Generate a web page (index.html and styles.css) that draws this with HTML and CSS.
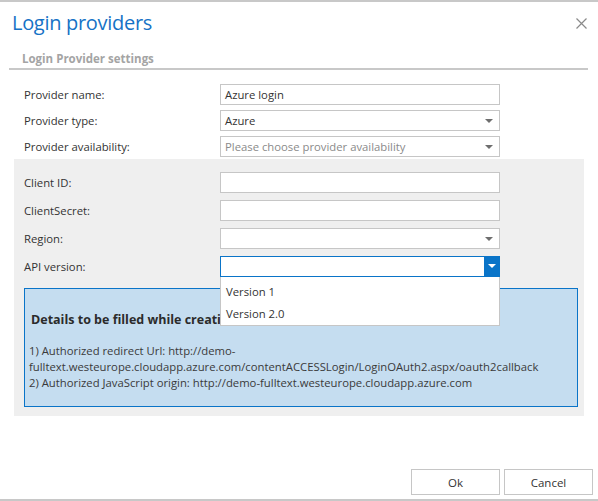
FILE: index.html
```html
<!DOCTYPE html>
<html>
<head>
<meta charset="utf-8">
<link rel="stylesheet" href="styles.css">
</head>
<body>
<div class="dialog">
  <div class="header">
    <h1 class="title">Login providers</h1>
    <span class="close">
      <svg width="11" height="11" viewBox="0 0 11 11"><path d="M0.5 0.5 L10.5 10.5 M10.5 0.5 L0.5 10.5" stroke="#8a8a8a" stroke-width="1.2" fill="none"/></svg>
    </span>
  </div>
  <div class="section-head">Login Provider settings</div>

  <div class="form top-form">
    <label class="lbl">Provider name:</label>
    <div class="field">Azure login</div>
    <label class="lbl">Provider type:</label>
    <div class="field select">Azure<span class="arrow"></span></div>
    <label class="lbl">Provider availability:</label>
    <div class="field select placeholder">Please choose provider availability<span class="arrow"></span></div>
  </div>

  <div class="gray">
    <div class="form gray-form">
      <label class="lbl">Client ID:</label>
      <div class="field"></div>
      <label class="lbl">ClientSecret:</label>
      <div class="field"></div>
      <label class="lbl">Region:</label>
      <div class="field select"><span class="arrow"></span></div>
      <label class="lbl">API version:</label>
      <div class="field select active"><span class="btn-arrow"><span class="arrow white"></span></span>
        <div class="dropdown">
          <div class="opt">Version 1</div>
          <div class="opt">Version 2.0</div>
        </div>
      </div>
    </div>
    <div class="info">
      <div class="info-title">Details to be filled while creating the app</div>
      <div class="info-text">1) Authorized redirect Url: http://demo-<br>fulltext.westeurope.cloudapp.azure.com/contentACCESSLogin/LoginOAuth2.aspx/oauth2callback<br>2) Authorized JavaScript origin: http://demo-fulltext.westeurope.cloudapp.azure.com</div>
    </div>
  </div>

  <div class="footer">
    <button class="btn">Ok</button>
    <button class="btn">Cancel</button>
  </div>
</div>
</body>
</html>
```
FILE: styles.css
```css
html, body {
  margin: 0;
  padding: 0;
  background: #fff;
}
body {
  font-family: "Open Sans", "Noto Sans", sans-serif;
  font-size: 11.3px;
  color: #333;
}
.dialog {
  width: 598px;
  height: 501px;
  box-sizing: border-box;
  border-top: 2px solid #c8c8c8;
  border-bottom: 2px solid #c8c8c8;
  display: flex;
  flex-direction: column;
}
.header {
  display: flex;
  justify-content: space-between;
  align-items: flex-start;
  padding: 0 11px 0 12px;
  height: 42px;
}
.title {
  margin: 0;
  font-weight: normal;
  font-size: 20px;
  letter-spacing: -0.3px;
  line-height: 30px;
  padding-top: 6px;
  color: #1672c6;
}
.close {
  margin-top: 16px;
  display: block;
  line-height: 0;
}
.section-head {
  margin: 0 10px 0 9px;
  padding: 7px 0 1px 13px;
  border-bottom: 2px solid #c8c8c8;
  font-weight: bold;
  color: #a4a4a4;
  font-size: 11.5px;
  line-height: 16px;
}
.form {
  display: grid;
  grid-template-columns: 196px 280px;
  align-items: center;
}
.top-form {
  padding: 14px 0 0 24px;
  row-gap: 5px;
}
.lbl {
  color: #333;
}
.field {
  position: relative;
  height: 21px;
  box-sizing: border-box;
  border: 1px solid #c6c6c6;
  background: #fff;
  padding: 0 0 0 4px;
  line-height: 19px;
  color: #333;
}
.placeholder {
  color: #8a8a8a;
}
.arrow {
  position: absolute;
  right: 6px;
  top: 8px;
  width: 0;
  height: 0;
  border-left: 4px solid transparent;
  border-right: 4px solid transparent;
  border-top: 4px solid #6e6e6e;
}
.arrow.white {
  border-top-color: #fff;
  right: 4px;
  top: 8px;
}
.field.active {
  border-color: #0a74c8;
}
.btn-arrow {
  position: absolute;
  right: -1px;
  top: -1px;
  width: 16px;
  height: 21px;
  background: #0a74c8;
}
.gray {
  margin: 2px 14px 0 14px;
  background: #efefef;
  padding: 13px 6px 9px 10px;
}
.gray-form {
  row-gap: 7px;
}
.dropdown {
  position: absolute;
  left: -1px;
  top: 20px;
  width: 280px;
  height: 49px;
  box-sizing: border-box;
  background: #fff;
  border: 1px solid #c6c6c6;
  border-top: none;
  z-index: 5;
  padding-top: 4px;
}
.opt {
  padding-left: 5px;
  line-height: 22px;
  color: #333;
}
.info {
  margin-top: 11px;
  height: 119px;
  box-sizing: border-box;
  background: #c5ddf0;
  border: 1px solid #0a74c8;
  padding: 22px 6px 0 4px;
  overflow: hidden;
}
.info-title {
  font-weight: bold;
  font-size: 12.5px;
  line-height: 18px;
  padding-left: 2px;
  width: 189px;
  overflow: hidden;
  white-space: nowrap;
  color: #2b2b2b;
}
.info-text {
  margin-top: 14px;
  line-height: 16px;
  color: #3a3a3a;
  white-space: nowrap;
}
.footer {
  margin-top: auto;
  display: flex;
  justify-content: flex-end;
  gap: 4px;
  padding: 0 5px 4px 0;
}
.btn {
  width: 89px;
  height: 26px;
  background: #fff;
  border: 1px solid #c6c6c6;
  font-family: inherit;
  font-size: 11.5px;
  color: #333;
  padding: 0;
}
```
